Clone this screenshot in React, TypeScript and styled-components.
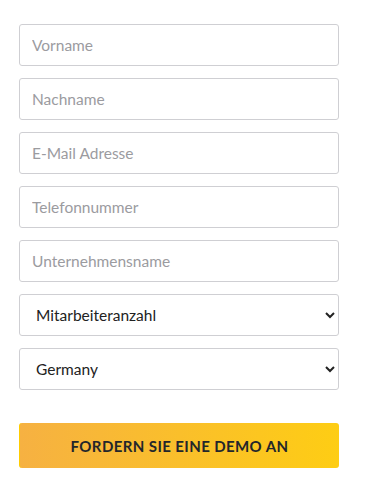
import React from "react";
import styled, { createGlobalStyle } from "styled-components";

const Global = createGlobalStyle`
  html, body { margin: 0; padding: 0; background: #fff; }
  body { font-family: Lato, "Open Sans", sans-serif; }
  * { box-sizing: border-box; }
`;

const Form = styled.form`
  width: 320px;
  margin: 24px 0 0 19px;
  display: flex;
  flex-direction: column;
  gap: 12px;
`;

const Input = styled.input`
  height: 42px;
  width: 100%;
  border: 1px solid #cfcfd3;
  border-radius: 3px;
  padding: 0 12px;
  font-family: Lato, sans-serif;
  font-size: 15.5px;
  color: #333;
  background: #fff;
  outline: none;
  &::placeholder { color: #9b9b9f; }
`;

const Select = styled.select`
  height: 42px;
  width: 100%;
  border: 1px solid #cfcfd3;
  border-radius: 3px;
  padding: 0 8px 0 12px;
  font-family: Lato, sans-serif;
  font-size: 15.5px;
  color: #222;
  background: #fff;
  outline: none;
`;

const Button = styled.button`
  margin-top: 21px;
  height: 45px;
  width: 100%;
  border: none;
  border-left: 1px solid #ffcc00;
  border-radius: 3px;
  background: linear-gradient(90deg, #f6b142 0%, #fecd14 100%);
  font-family: Lato, sans-serif;
  font-weight: 700;
  font-size: 15px;
  letter-spacing: 0.4px;
  text-transform: uppercase;
  color: #23262b;
  cursor: pointer;
`;

export default function App() {
  return (
    <>
      <Global />
      <Form onSubmit={(e) => e.preventDefault()}>
        <Input placeholder="Vorname" />
        <Input placeholder="Nachname" />
        <Input placeholder="E-Mail Adresse" />
        <Input placeholder="Telefonnummer" />
        <Input placeholder="Unternehmensname" />
        <Select defaultValue="">
          <option value="">Mitarbeiteranzahl</option>
          <option>1-10</option>
          <option>11-50</option>
        </Select>
        <Select defaultValue="DE">
          <option value="DE">Germany</option>
          <option value="AT">Austria</option>
        </Select>
        <Button type="submit">Fordern Sie eine Demo an</Button>
      </Form>
    </>
  );
}
